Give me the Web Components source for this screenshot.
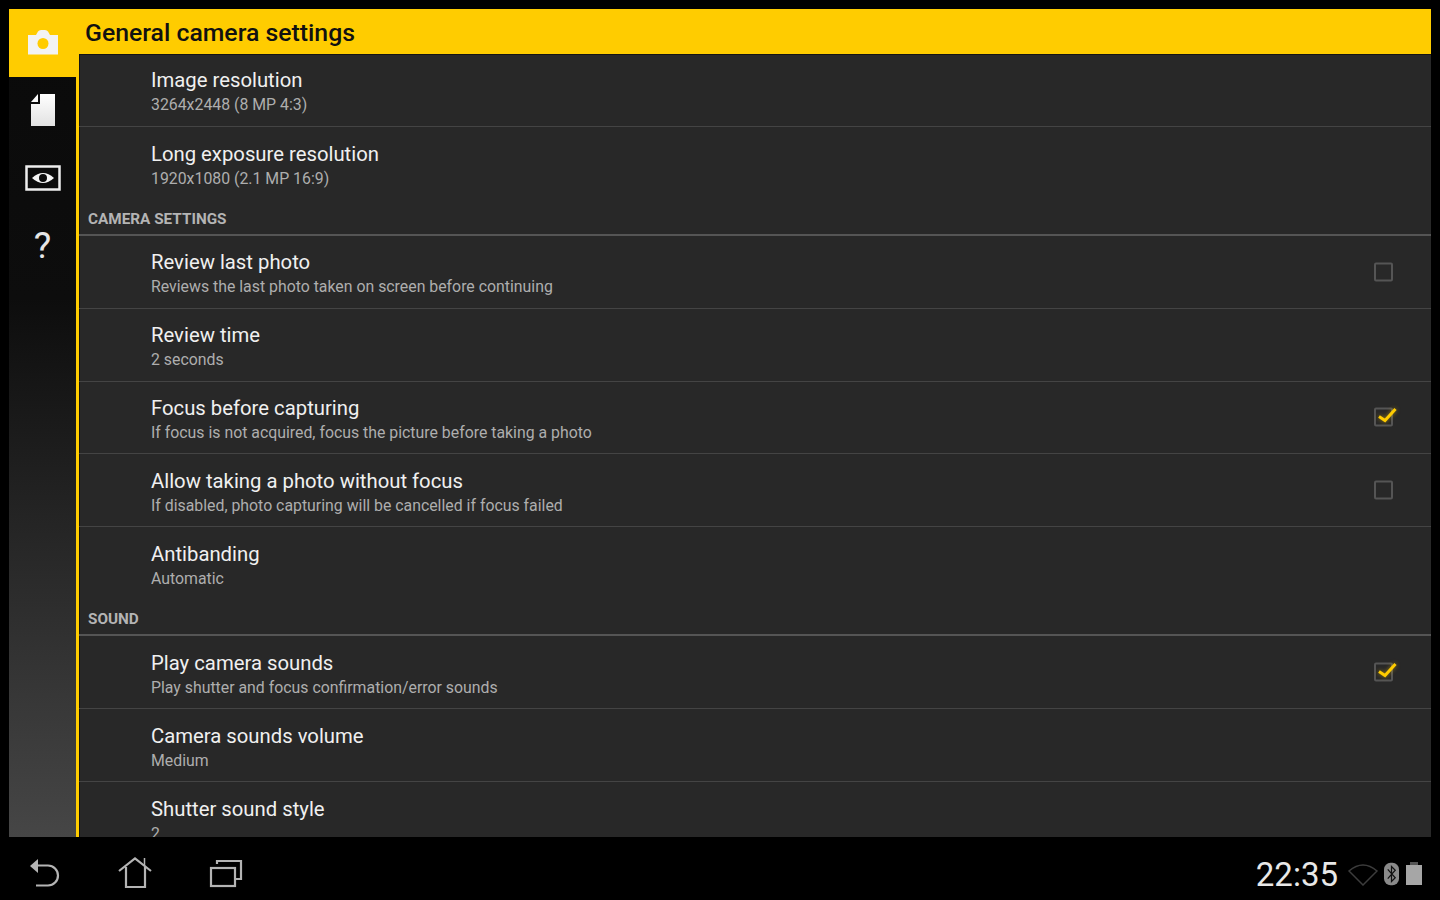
<!DOCTYPE html>
<html>
<head>
<meta charset="utf-8">
<title>General camera settings</title>
<style>
	html, body { margin: 0; height: 100%; background: #000; overflow: hidden; }
	body { font-family: Roboto, "Liberation Sans", sans-serif; }
</style>
</head>
<body>
<camera-app>
	<side-tabs slot="side"></side-tabs>
	<span slot="title">General camera settings</span>

	<setting-row title-text="Image resolution" sub="3264x2448 (8 MP 4:3)"></setting-row>
	<setting-row title-text="Long exposure resolution" sub="1920x1080 (2.1 MP 16:9)" last></setting-row>

	<section-head>CAMERA SETTINGS</section-head>
	<setting-row title-text="Review last photo" sub="Reviews the last photo taken on screen before continuing" check="off"></setting-row>
	<setting-row title-text="Review time" sub="2 seconds"></setting-row>
	<setting-row title-text="Focus before capturing" sub="If focus is not acquired, focus the picture before taking a photo" check="on"></setting-row>
	<setting-row title-text="Allow taking a photo without focus" sub="If disabled, photo capturing will be cancelled if focus failed" check="off"></setting-row>
	<setting-row title-text="Antibanding" sub="Automatic" last></setting-row>

	<section-head>SOUND</section-head>
	<setting-row title-text="Play camera sounds" sub="Play shutter and focus confirmation/error sounds" check="on"></setting-row>
	<setting-row title-text="Camera sounds volume" sub="Medium"></setting-row>
	<setting-row title-text="Shutter sound style" sub="2" last></setting-row>

	<nav-bar slot="nav"></nav-bar>
</camera-app>

<script>
// app frame: black border, yellow title bar, sidebar on the left, list on the right
class CameraApp extends HTMLElement {
	constructor() {
		super();
		this.attachShadow({ mode: 'open' }).innerHTML = `
			<style>
				:host {
					display: grid;
					grid-template-rows: 837px 63px;
					height: 900px;
					width: 1440px;
					background: #000;
				}
				.frame {
					display: grid;
					grid-template-columns: 67px 1fr;
					margin: 9px 9px 0 9px;
					background: #282828;
					overflow: hidden;
					min-height: 0;
				}
				.main {
					display: flex;
					flex-direction: column;
					min-width: 0;
					min-height: 0;
				}
				header {
					background: #ffcc00;
					color: #111;
					font-size: 24.800px;
					font-weight: 500;
					height: 45px;
					line-height: 47px;
					padding-left: 9px;
					flex: none;
				}
				.list {
					flex: 1;
					min-height: 0;
					overflow: hidden;
					border-left: 3px solid #ffcc00;
					box-shadow: inset 1px 1px 0 #141414;
				}
			</style>
			<div class="frame">
				<slot name="side"></slot>
				<div class="main">
					<header><slot name="title"></slot></header>
					<div class="list"><slot></slot></div>
				</div>
			</div>
			<slot name="nav"></slot>
		`;
	}
}

class SideTabs extends HTMLElement {
	constructor() {
		super();
		this.attachShadow({ mode: 'open' }).innerHTML = `
			<style>
				:host {
					display: block;
					background: linear-gradient(#0a0a0a 0%, #0d0d0d 35%, #464646 100%);
				}
				div {
					display: flex;
					align-items: center;
					justify-content: center;
					height: 67px;
				}
				.active { background: #ffcc00; height: 68px; }
				.help { font: 400 37px/1 Roboto, sans-serif; color: #e6e6e6; padding-top: 2px; box-sizing: border-box; }
				svg { display: block; }
				.up { margin-top: -3px; }
				.page { margin-top: -1px; }
				.down { margin-top: 1px; }
			</style>
			<div class="active">
				<svg class="up" width="32" height="27" viewBox="0 0 32 27">
					<path fill="#f3f3f3" d="M1 7h8l2-3.500Q12 2 14 2h4q2 0 3 1.500L23 7h8v19.500H1z"/>
					<circle cx="16" cy="15.500" r="5.500" fill="#ffcc00"/>
				</svg>
			</div>
			<div>
				<svg class="page" width="26" height="34" viewBox="0 0 26 34">
					<defs><linearGradient id="pg" x1="0" y1="0" x2="0" y2="1"><stop offset="0" stop-color="#fff"/><stop offset="1" stop-color="#e2e2e2"/></linearGradient></defs>
					<path fill="url(#pg)" d="M1 9 8 1v8zM10 1h15v32H1V11h9z"/>
				</svg>
			</div>
			<div>
				<svg class="down" width="36" height="26" viewBox="0 0 36 26">
					<rect x="1.500" y="1.500" width="33" height="23" fill="none" stroke="#eee" stroke-width="2.500"/>
					<path fill="#f5f5f5" d="M7 13Q18 3 29 13 18 23 7 13z"/>
					<circle cx="18" cy="13" r="4" fill="#0b0b0b"/>
				</svg>
			</div>
			<div class="help">?</div>
		`;
	}
}

class SectionHead extends HTMLElement {
	constructor() {
		super();
		this.attachShadow({ mode: 'open' }).innerHTML = `
			<style>
				:host {
					display: block;
					box-sizing: border-box;
					height: 36.200px;
					padding: 9px 0 0 9px;
					border-bottom: 2px solid #555;
					color: #b4b4b4;
					font-size: 15.300px;
					font-weight: 700;
					line-height: 20px;
				}
			</style>
			<slot></slot>
		`;
	}
}

class SettingRow extends HTMLElement {
	constructor() {
		super();
		this.attachShadow({ mode: 'open' });
	}

	connectedCallback() {
		const check = this.getAttribute('check');
		let box = '';
		if (check) {
			box = `<svg class="box" width="26" height="26" viewBox="0 0 26 26">
				<rect x="4" y="4.500" width="17" height="17" rx="1" fill="none" stroke="#555" stroke-width="2"/>
				${check === 'on' ? '<path d="M8 12.500l6 4L24.500 5" fill="none" stroke="#ffcc00" stroke-width="3" style="filter:drop-shadow(0 0 2px rgba(255,204,0,.5))"/>' : ''}
			</svg>`;
		}
		this.shadowRoot.innerHTML = `
			<style>
				:host {
					display: flex;
					align-items: center;
					box-sizing: border-box;
					height: 72.850px;
					padding: 0 34px 0 72px;
					border-bottom: 1px solid #444;
				}
				:host([last]) { border-bottom: 0; }
				.text { flex: 1; padding-top: 2px; }
				.t {
					color: #f0f0f0;
					font-size: 20.300px;
					line-height: 28px;
				}
				.s {
					color: #aeaeae;
					font-size: 15.850px;
					line-height: 20px;
					margin-top: 1px;
				}
				.box { flex: none; overflow: visible; }
			</style>
			<div class="text">
				<div class="t">${this.getAttribute('title-text')}</div>
				<div class="s">${this.getAttribute('sub')}</div>
			</div>
			${box}
		`;
	}
}

class NavBar extends HTMLElement {
	constructor() {
		super();
		this.attachShadow({ mode: 'open' }).innerHTML = `
			<style>
				:host {
					display: flex;
					align-items: center;
					background: #000;
					padding: 9px 18px 0 28px;
				}
				svg { display: block; flex: none; }
				.keys { display: flex; align-items: center; flex: 1; }
				.home { margin-left: 56px; }
				.recents { margin-left: 57px; }
				.time {
					color: #e8e8e8;
					font-size: 33px;
					font-weight: 400;
					margin-right: 10px;
					line-height: 1;
					padding-top: 3px;
				}
				.status { display: flex; align-items: center; margin-top: 1px; }
			</style>
			<div class="keys">
				<svg width="34" height="32" viewBox="0 0 34 32" fill="none" stroke="#b4b4b4" stroke-width="2.200">
					<path d="M10 8.500h10a10 10 0 0 1 0 20H8"/>
					<path fill="#b4b4b4" stroke="none" d="M2 9l8-7v14z"/>
				</svg>
				<svg class="home" width="34" height="32" viewBox="0 0 34 32" fill="none" stroke="#b4b4b4" stroke-width="2.200">
					<path d="M1 14 17 1.500 33 14"/>
					<path d="M8 10v20h19V10"/>
					<path d="M26.500 1v8" stroke-width="1.500"/>
				</svg>
				<svg class="recents" width="34" height="32" viewBox="0 0 34 32" fill="none" stroke="#b4b4b4" stroke-width="2.200">
					<rect x="2" y="11" width="24" height="18"/>
					<path d="M8 7V4h24v18h-5"/>
				</svg>
			</div>
			<span class="time">22:35</span>
			<div class="status">
				<svg width="30" height="24" viewBox="0 0 30 24" fill="none" stroke="#3c3c3c" stroke-width="1.500"><path d="M1 9Q15-3 29 9L15 23z"/></svg>
				<svg style="margin-left:6px" width="15" height="24" viewBox="0 0 16 24">
					<rect width="16" height="24" rx="7" fill="#8a8a8a"/>
					<path d="M4 7l8 9-4 4V4l4 4-8 9" fill="none" stroke="#111" stroke-width="1.300"/>
				</svg>
				<svg style="margin-left:7px" width="16" height="24" viewBox="0 0 16 24">
					<rect x="4" width="8" height="3" fill="#555"/>
					<rect y="3" width="16" height="20" fill="#a6a6a6"/>
				</svg>
			</div>
		`;
	}
}

customElements.define('camera-app', CameraApp);
customElements.define('side-tabs', SideTabs);
customElements.define('section-head', SectionHead);
customElements.define('setting-row', SettingRow);
customElements.define('nav-bar', NavBar);
</script>
</body>
</html>
